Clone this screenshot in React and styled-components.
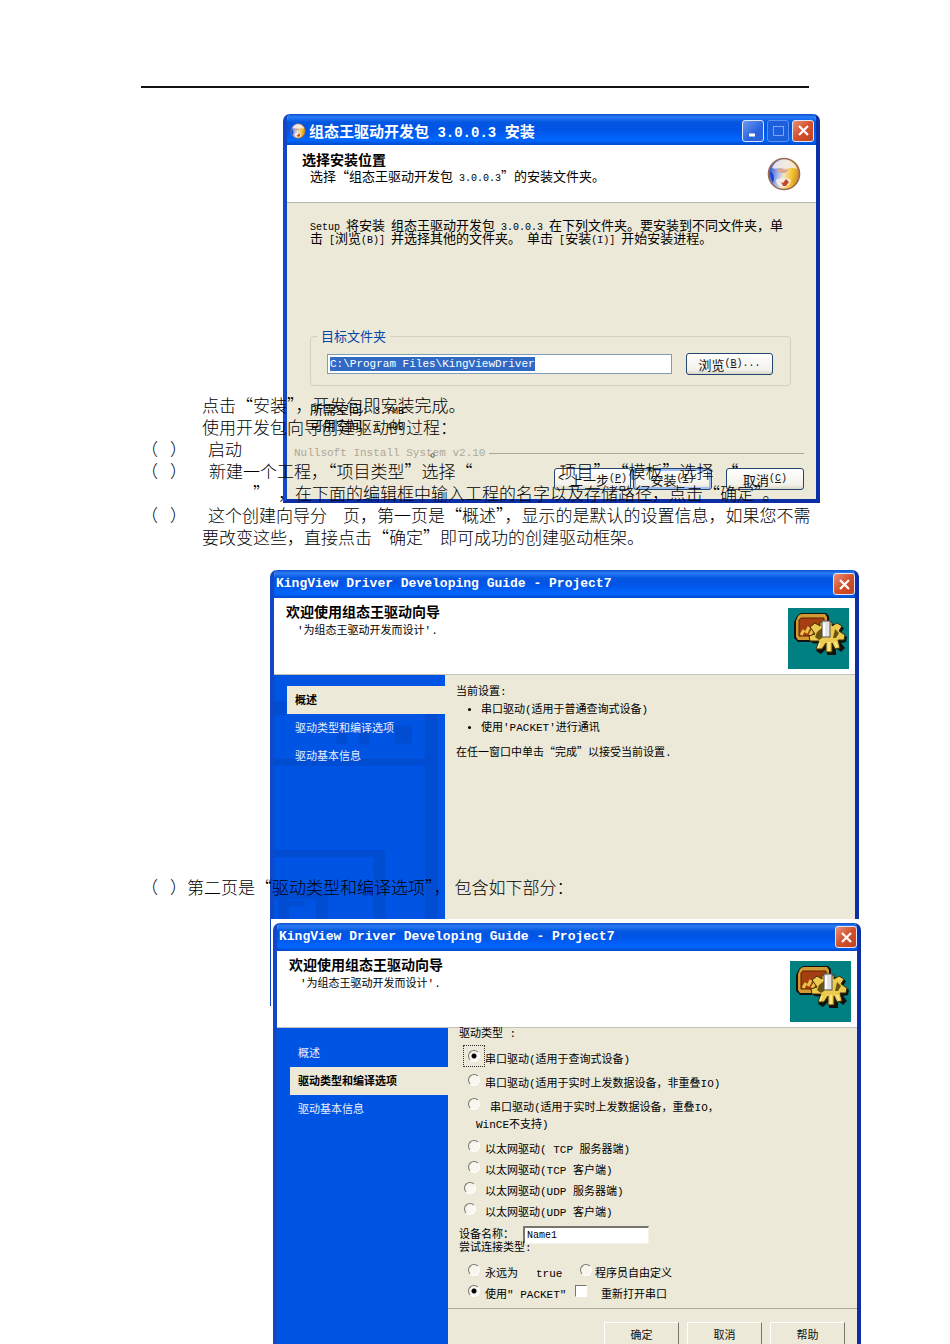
import React from 'react'
import styled, { createGlobalStyle } from 'styled-components'


const GuideDialog = ({ active, children, footer }) => {
  const steps = ['概述', '驱动类型和编译选项', '驱动基本信息'];

  return (
    <Dialog>
      <GuideTitleBar>
        <GuideTitle>KingView Driver Developing Guide - Project7</GuideTitle>
        <CloseButton />
      </GuideTitleBar>
      <GuideHeader>
        <div>
          <GuideHeading>欢迎使用组态王驱动向导</GuideHeading>
          <GuideSub>'为组态王驱动开发而设计'.</GuideSub>
        </div>
        <GearPicture />
      </GuideHeader>
      <GuideBody>
        <StepNav>
          {active === 0 && <NavPattern />}
          {steps.map((step, i) => (
            <StepLink key={step} href="#" $active={i === active}>{step}</StepLink>
          ))}
        </StepNav>
        <GuideContent>
          {children}
          {footer}
        </GuideContent>
      </GuideBody>
    </Dialog>
  )
};

const CloseButton = () => (
  <CaptionButton $close aria-label="关闭">
    <svg width="13" height="13" viewBox="0 0 13 13">
      <path d="M2 2L11 11M11 2L2 11" stroke="#fff" strokeWidth="2.2" />
    </svg>
  </CaptionButton>
);

const GlobeIcon = ({ size }) => (
  <svg width={size} height={size} viewBox="0 0 34 34">
    <defs>
      <linearGradient id="globe" x1="0" y1="0.4" x2="1" y2="0.6">
        <stop offset="0" stopColor="#2a4fd0" />
        <stop offset="0.3" stopColor="#9db4ee" />
        <stop offset="0.5" stopColor="#f6e3c8" />
        <stop offset="0.75" stopColor="#f3c426" />
        <stop offset="1" stopColor="#c9842a" />
      </linearGradient>
    </defs>
    <circle cx="17" cy="17" r="15.5" fill="url(#globe)" stroke="#9a6a58" strokeWidth="1.6" />
    <path d="M5 11C8 4 14 2 19 3C25 4 29 8 30 12C25 10 22 12 18 11C13 10 9 13 5 11Z" fill="#f4ece6" opacity="0.9" />
    <path d="M10 12C14 10 18 14 22 12L20 15C16 17 13 15 10 15Z" fill="#dca88c" />
    <path d="M9 23C13 20 20 20 24 23C24 27 20 31 15 30C11 29 9 26 9 23Z" fill="#f8efe4" opacity="0.85" />
    <path d="M14 25L16 26L19 22L22 25L19 29H16Z" fill="#c8442a" />
    <path d="M3 15C5 14 7 18 7 22L6 26C4 23 3 19 3 15Z" fill="#2346c8" />
  </svg>
);

const GearPicture = () => (
  <svg width="61" height="61" viewBox="0 0 61 61">
    <rect width="61" height="61" fill="#008080" />
    <path d="M9 8L13 5H38L41 8V30L37 34H10L6 30V14Z" fill="#111" />
    <path d="M10 8L13 6H37L39 9V29L36 32H10L8 29V13Z" fill="#d39a33" />
    <path d="M13 10H36V28H11V12Z" fill="#a53e10" stroke="#5a2205" />
    <path d="M13 27L16 22M18 25L21 19M22 27L25 22" stroke="#e8c548" strokeWidth="3" />
    <path d="M22 19L27 15L32 18V14H44V18L49 15L54 18L51 23L57 27L56 32L51 33L55 38L51 42L46 38V45H37V38L31 44L26 41L30 34L22 33L21 28L27 26Z" fill="#111" transform="translate(2 2)" />
    <path d="M22 19L27 15L32 18V14H44V18L49 15L54 18L51 23L57 27L56 32L50 32L52 40L47 41L44 35V44H38V35L34 41L28 41L31 33L22 33L21 28L27 26Z" fill="#edcb50" stroke="#3a3008" />
    <path d="M29 24L34 20V30L31 32L27 29ZM47 21L51 25L48 30L45 30Z" fill="#6a5510" />
    <rect x="34" y="13" width="8" height="16" fill="#e4e4e4" stroke="#555" />
    <path d="M36 15V28" stroke="#fff" strokeWidth="2" />
    <path d="M32 35L30 40M41 34V43M47 34L49 39" stroke="#fff0a0" strokeWidth="1.5" />
  </svg>
);

const NavPattern = () => (
  <PatternSvg viewBox="0 0 170 330" preserveAspectRatio="xMinYMin meet">
    <g fill="#004dd2">
      <rect x="0" y="26" width="12" height="14" />
      <rect x="62" y="54" width="10" height="15" />
      <rect x="85" y="54" width="10" height="15" />
      <rect x="120" y="50" width="17" height="18" />
      <rect x="0" y="83" width="150" height="7" />
      <rect x="150" y="38" width="13" height="292" />
      <rect x="0" y="174" width="111" height="7" />
      <rect x="99" y="181" width="12" height="149" />
      <rect x="0" y="215" width="42" height="8" />
      <rect x="42" y="215" width="12" height="115" />
      <rect x="4" y="223" width="11" height="107" />
      <rect x="15" y="225" width="16" height="5" />
    </g>
  </PatternSvg>
);

const RadioOption = ({ name, checked, focused, outset, label }) => (
  <Option $outset={outset}>
    <RadioSlot $focused={focused}><Radio type="radio" name={name} defaultChecked={checked} /></RadioSlot>
    <span>{label}</span>
  </Option>
);

const App = () => {
  return (
    <>
      <GlobalStyle />
      <Page>
        <HeaderRule />

        <Section>
          <SetupFigure>
            <Dialog>
              <TitleBar>
                <GlobeIcon size={16} />
                <SetupTitle>组态王驱动开发包<TitleLatin> 3.0.0.3 </TitleLatin>安装</SetupTitle>
                <CaptionButton aria-label="最小化">
                  <svg width="13" height="13" viewBox="0 0 13 13"><path d="M2 11H8" stroke="#fff" strokeWidth="3" /></svg>
                </CaptionButton>
                <CaptionButton $dim aria-label="最大化">
                  <svg width="13" height="13" viewBox="0 0 13 13"><path d="M1 2.5H12M1.5 2V11.5H11.5V2" fill="none" stroke="#7fa6f5" /></svg>
                </CaptionButton>
                <CloseButton />
              </TitleBar>
              <SetupHeader>
                <div>
                  <SetupHeading>选择安装位置</SetupHeading>
                  <SetupSub>选择“组态王驱动开发包<Latin> 3.0.0.3</Latin>”的安装文件夹。</SetupSub>
                </div>
                <GlobeIcon size={34} />
              </SetupHeader>
              <SetupBody>
                <SetupText>
                  <Latin>Setup </Latin>将安装<Latin> </Latin>组态王驱动开发包<Latin> 3.0.0.3 </Latin>在下列文件夹。要安装到不同文件夹，单<br />
                  击<Latin> [</Latin>浏览<Latin>(B)] </Latin>并选择其他的文件夹。<Latin> </Latin>单击<Latin> [</Latin>安装<Latin>(I)] </Latin>开始安装进程。
                </SetupText>
                <FolderGroup>
                  <FolderLegend>目标文件夹</FolderLegend>
                  <PathBox><PathInput aria-label="目标文件夹" defaultValue="C:\Program Files\KingViewDriver" /></PathBox>
                  <XpButton $width={87}>浏览<Latin>(<u>B</u>)...</Latin></XpButton>
                </FolderGroup>
                <SpaceInfo>
                  所需空间<Latin>: 3.7MB</Latin><br />
                  可用空间<Latin>: 1.4GB</Latin>
                </SpaceInfo>
                <Brand>Nullsoft Install System v2.10</Brand>
                <SetupButtons>
                  <XpButton $width={77}><Latin>&lt; </Latin>上一步<Latin>(<u>P</u>)</Latin></XpButton>
                  <XpButton $width={79} $primary>安装<Latin>(<u>I</u>)</Latin></XpButton>
                  <XpButton $width={78} $last>取消<Latin>(<u>C</u>)</Latin></XpButton>
                </SetupButtons>
              </SetupBody>
            </Dialog>
          </SetupFigure>
          <Notes $top={280}>
            <Note>
              <span />
              <p>点击“安装”，开发包即安装完成。<br />使用开发包向导创建驱动的过程：</p>
            </Note>
            <Note>
              <span>（<Blank $width={12} />）</span>
              <p><Blank $width={6} />启动<Blank $width={188} /><FullStop>。</FullStop></p>
            </Note>
            <Note>
              <span>（<Blank $width={12} />）</span>
              <p>
                <Blank $width={7} />新建一个工程，“项目类型”选择“<Blank $width={87} />项目”<Blank $width={1} />“模板”选择<Blank $width={8} />“<br />
                <Blank $width={51} />”<Blank $width={8} />，在下面的编辑框中输入工程的名字以及存储路径，点击“确定”。
              </p>
            </Note>
            <Note>
              <span>（<Blank $width={12} />）</span>
              <p>
                <Blank $width={6} />这个创建向导分<Blank $width={16} />页，第一页是“概述”，显示的是默认的设置信息，如果您不需<br />
                要改变这些，直接点击“确定”即可成功的创建驱动框架。
              </p>
            </Note>
          </Notes>
        </Section>

        <Section>
          <GuideFigure>
            <GuideDialog active={0}>
              <Summary>
                <p>当前设置:</p>
                <ul>
                  <li>串口驱动(适用于普通查询式设备)</li>
                  <li>使用'PACKET'进行通讯</li>
                </ul>
                <p>在任一窗口中单击<CjkText>“完成”</CjkText>以接受当前设置.</p>
              </Summary>
            </GuideDialog>
          </GuideFigure>
          <Notes $top={306}>
            <p>（<Blank $width={12} />）第二页是“驱动类型和编译选项”，<Blank $width={4} />包含如下部分：</p>
          </Notes>
        </Section>

        <OverlapFigure>
          <GuideDialog
            active={1}
            footer={
              <GuideButtons>
                <ClassicButton>确定</ClassicButton>
                <ClassicButton>取消</ClassicButton>
                <ClassicButton>帮助</ClassicButton>
              </GuideButtons>
            }
          >
            <GroupLabel>驱动类型 :</GroupLabel>
            <SerialOptions>
              <RadioOption name="driver" checked focused label="串口驱动(适用于查询式设备)" />
              <RadioOption name="driver" label="串口驱动(适用于实时上发数据设备，非重叠IO)" />
              <RadioOption name="driver" label={<><Blank $width={5} />串口驱动(适用于实时上发数据设备，重叠IO，</>} />
            </SerialOptions>
            <OptionRest>WinCE不支持)</OptionRest>
            <RadioOption name="driver" label="以太网驱动( TCP 服务器端)" />
            <RadioOption name="driver" label="以太网驱动(TCP 客户端)" />
            <RadioOption name="driver" outset label="以太网驱动(UDP 服务器端)" />
            <RadioOption name="driver" outset label="以太网驱动(UDP 客户端)" />
            <NameRow>
              <label htmlFor="device">设备名称：</label>
              <NameInput id="device" defaultValue="Name1" />
            </NameRow>
            <GroupLabel>尝试连接类型:</GroupLabel>
            <ConnectGrid>
              <RadioOption name="connect" label={<>永远为<Blank $width={18} />true</>} />
              <RadioOption name="connect" label="程序员自由定义" />
              <RadioOption name="connect" checked label={'使用" PACKET"'} />
              <CheckOption><CheckBox type="checkbox" /><span>重新打开串口</span></CheckOption>
            </ConnectGrid>
          </GuideDialog>
        </OverlapFigure>
      </Page>
    </>
  )
};

export default App

const GlobalStyle = createGlobalStyle`
  * {
    box-sizing: border-box;
  }
  body {
    margin: 0;
    background-color: #fff;
    color: #000;
    font-family: 'Noto Sans CJK SC', sans-serif;
  }
  p, ul {
    margin: 0;
    padding: 0;
  }
  svg {
    display: block;
    flex-shrink: 0;
  }
`;

const Page = styled.main`
  height: 100vh;
  overflow: hidden;
  padding: 86px 89px 0 141px;
`;

const HeaderRule = styled.div`
  height: 2px;
  margin: 0 52px 26px 0;
  background-color: #111;
`;

/* the figure and the notes share one cell, the notes run over the figure */
const Section = styled.section`
  display: grid;
  grid-template-columns: minmax(0, 1fr);
  margin-bottom: 22px;
  > * {
    grid-area: 1 / 1;
  }
`;

const SetupFigure = styled.div`
  margin: 0 41px 0 142px;
  height: 389px;
  display: grid;
`;

const GuideFigure = styled.div`
  margin: 0 2px 0 129px;
  height: 436px;
  display: grid;
`;

const OverlapFigure = styled.div`
  position: relative;
  margin: -109px 0 0 130px;
  padding: 4px 0 0 2px;
  height: 460px;
  background-color: #fff;
  display: grid;
`;

const Notes = styled.div`
  z-index: 1;
  padding-top: ${({ $top }) => $top}px;
  font-size: 17px;
  font-weight: 300;
  line-height: 22px;
  white-space: nowrap;
  pointer-events: none;
`;

const Note = styled.div`
  display: grid;
  grid-template-columns: 61px 1fr;
`;

const FullStop = styled.span`
  font-size: 13px;
  line-height: 0;
`;

const Blank = styled.span`
  display: inline-block;
  width: ${({ $width }) => $width}px;
`;

const Latin = styled.span`
  font-family: 'Liberation Mono', monospace;
  font-size: 10px;
  line-height: 0;
  white-space: pre;
`;

const TitleLatin = styled.span`
  font-family: 'Liberation Mono', monospace;
  font-size: 14px;
  line-height: 0;
  white-space: pre;
`;

const CjkText = styled.span`
  font-family: 'Noto Sans CJK SC', sans-serif;
`;

const Dialog = styled.div`
  display: flex;
  flex-direction: column;
  min-width: 0;
  overflow: hidden;
  border: 4px solid #1148c8;
  border-top: none;
  border-right-color: #0d2fa6;
  border-bottom-color: #0d2fa6;
  border-radius: 7px 7px 0 0;
  background-color: #ece9d8;
`;

const TitleBar = styled.div`
  display: flex;
  align-items: center;
  gap: 3px;
  height: 31px;
  flex-shrink: 0;
  padding: 2px 2px 0 3px;
  background: linear-gradient(#0a50d0 0, #2a7cf5 3px, #0457e0 8px, #0054e6 50%, #0066ff 85%, #0048c8 100%);
  color: #fff;
`;

const GuideTitleBar = styled(TitleBar)`
  height: 28px;
  padding: 0 0 0 2px;
`;

const SetupTitle = styled.h1`
  flex: 1;
  margin: 0;
  font-size: 15px;
  line-height: 20px;
  font-weight: 700;
  white-space: nowrap;
`;

const GuideTitle = styled.h2`
  flex: 1;
  margin: 0;
  font-family: 'Liberation Mono', monospace;
  font-size: 13px;
  line-height: 20px;
  font-weight: 700;
  white-space: nowrap;
`;

const CaptionButton = styled.button`
  display: flex;
  align-items: center;
  justify-content: center;
  width: 22px;
  height: 22px;
  padding: 0;
  border: 1px solid ${({ $dim }) => ($dim ? '#5d8ff0' : '#dfe8fb')};
  border-radius: 3px;
  background: ${({ $close, $dim }) => ($close ? 'linear-gradient(135deg, #e8907a, #d4502c 50%, #c04420)' : $dim ? '#1c5fdc' : 'linear-gradient(135deg, #6d9bf2, #2a63dc 60%)')};
`;

const SetupHeader = styled.div`
  display: flex;
  justify-content: space-between;
  height: 58px;
  flex-shrink: 0;
  padding: 6px 15px 0;
  border-bottom: 1px solid #b9b7a8;
  background-color: #fff;
  > svg {
    margin-top: 6px;
  }
`;

const SetupHeading = styled.h2`
  margin: 0;
  font-size: 14px;
  line-height: 17px;
  font-weight: 700;
`;

const SetupSub = styled.p`
  padding-left: 8px;
  font-size: 13px;
  line-height: 16px;
`;

const SetupBody = styled.div`
  flex: 1;
  display: flex;
  flex-direction: column;
  padding: 15px 12px 0 23px;
  font-size: 13px;
`;

const SetupText = styled.p`
  line-height: 13px;
  white-space: nowrap;
`;

const FolderGroup = styled.fieldset`
  display: flex;
  align-items: center;
  gap: 14px;
  min-width: 0;
  margin: 83px 13px 0 0;
  padding: 8px 17px 10px 16px;
  border: 1px solid #d3d0bf;
  border-radius: 4px;
`;

const FolderLegend = styled.legend`
  margin-left: -10px;
  padding: 0 4px;
  color: #0046a8;
  font-size: 13px;
  line-height: 18px;
`;

const PathBox = styled.div`
  flex: 1;
  display: flex;
  height: 20px;
  padding: 2px;
  border: 1px solid #7f9db9;
  background-color: #fff;
`;

const PathInput = styled.input`
  field-sizing: content;
  padding: 0;
  border: none;
  background-color: #316ac5;
  color: #fff;
  font-family: 'Liberation Mono', monospace;
  font-size: 11px;
  line-height: 14px;
`;

const XpButton = styled.button`
  display: flex;
  align-items: center;
  justify-content: center;
  width: ${({ $width }) => $width}px;
  height: 22px;
  flex-shrink: 0;
  margin-left: ${({ $last }) => ($last ? '12px' : '0')};
  padding: 0;
  border: 1px solid #24466e;
  border-radius: 3px;
  background: linear-gradient(#fff, #f2f1ea 80%, #d8d4c6);
  box-shadow: ${({ $primary }) => ($primary ? 'inset 0 0 0 2px #9dbcf0' : 'none')};
  color: #111;
  font-family: 'Noto Sans CJK SC', sans-serif;
  font-size: 13px;
`;

const SpaceInfo = styled.p`
  margin-top: 15px;
  line-height: 16px;
`;

const Brand = styled.div`
  display: flex;
  align-items: center;
  gap: 4px;
  margin: 13px 0 0 -16px;
  color: #aca899;
  font-family: 'Liberation Mono', monospace;
  font-size: 11px;
  line-height: 14px;
  white-space: nowrap;
  &::after {
    content: '';
    flex: 1;
    border-top: 1px solid #aca899;
  }
`;

const SetupButtons = styled.div`
  display: flex;
  justify-content: flex-end;
  gap: 2px;
  margin-top: 8px;
`;

const GuideHeader = styled.div`
  display: flex;
  justify-content: space-between;
  height: 77px;
  flex-shrink: 0;
  padding: 3px 6px 0 12px;
  border-bottom: 1px solid #c4c2b6;
  background-color: #fff;
  > svg {
    margin-top: 7px;
  }
`;

const GuideHeading = styled.h3`
  margin: 0;
  font-size: 14px;
  line-height: 20px;
  font-weight: 700;
`;

const GuideSub = styled.p`
  padding-left: 11px;
  font-family: 'Liberation Mono', 'Noto Sans CJK SC', monospace;
  font-size: 11px;
  line-height: 20px;
`;

const GuideBody = styled.div`
  flex: 1;
  display: flex;
`;

const StepNav = styled.nav`
  position: relative;
  width: 171px;
  flex-shrink: 0;
  padding-top: 11px;
  overflow: hidden;
  background-color: #0054e3;
`;

const PatternSvg = styled.svg`
  position: absolute;
  top: 0;
  left: 0;
  width: 100%;
`;

const StepLink = styled.a`
  position: relative;
  display: block;
  height: 28px;
  margin-left: 13px;
  padding-left: 8px;
  background-color: ${({ $active }) => ($active ? '#ece9d8' : 'transparent')};
  color: ${({ $active }) => ($active ? '#000' : '#e6eefc')};
  font-size: 11px;
  line-height: 26px;
  font-weight: ${({ $active }) => ($active ? 700 : 400)};
  text-decoration: none;
`;

const GuideContent = styled.div`
  flex: 1;
  display: flex;
  flex-direction: column;
  min-width: 0;
  font-family: 'Liberation Mono', 'Noto Sans CJK SC', monospace;
  font-size: 11px;
  line-height: 13px;
  white-space: nowrap;
`;

const Summary = styled.div`
  padding: 8px 11px;
  line-height: 18px;
  ul {
    padding-left: 25px;
    margin-bottom: 5px;
  }
`;

const GroupLabel = styled.p`
  padding-left: 11px;
`;

const Option = styled.label`
  display: flex;
  align-items: center;
  gap: ${({ $outset }) => ($outset ? '9px' : '5px')};
  height: 21px;
  padding-left: ${({ $outset }) => ($outset ? '16px' : '20px')};
`;

const SerialOptions = styled.div`
  display: flex;
  flex-direction: column;
  gap: 3px;
  margin-top: 9px;
`;

const OptionRest = styled.p`
  padding: 0 0 8px 28px;
`;

const RadioSlot = styled.span`
  align-self: flex-start;
  display: flex;
  outline: ${({ $focused }) => ($focused ? '1px dotted #333' : 'none')};
  outline-offset: 4px;
`;

const Radio = styled.input`
  appearance: none;
  width: 12px;
  height: 12px;
  margin: 0;
  border: 1px solid;
  border-color: #77756c #fff #fff #77756c;
  border-radius: 50%;
  background-color: #f7f6ef;
  &:checked {
    background-image: radial-gradient(circle, #000 2px, transparent 3px);
  }
`;

const CheckOption = styled(Option)`
  gap: 14px;
  padding-left: 0;
`;

const CheckBox = styled.input`
  appearance: none;
  align-self: flex-start;
  width: 12px;
  height: 12px;
  margin: 0;
  border: 1px solid;
  border-color: #77756c #fff #fff #77756c;
  background-color: #fff;
`;

const NameRow = styled.div`
  display: flex;
  gap: 9px;
  height: 16px;
  margin-top: 2px;
  padding-left: 11px;
  line-height: 18px;
`;

const NameInput = styled.input`
  width: 126px;
  height: 18px;
  padding: 0 2px;
  border: 1px solid;
  border-width: 2px 1px 1px 2px;
  border-color: #77756c #f4f2e8 #f4f2e8 #77756c;
  background-color: #fff;
  font-family: 'Liberation Mono', monospace;
  font-size: 10px;
`;

const ConnectGrid = styled.div`
  display: grid;
  grid-template-columns: 127px 1fr;
  margin-top: 9px;
  padding-bottom: 2px;
  border-bottom: 1px solid #aca899;
  > :nth-child(2) {
    gap: 3px;
    padding-left: 5px;
  }
`;

const GuideButtons = styled.div`
  display: flex;
  justify-content: flex-end;
  gap: 8px;
  padding: 13px 12px 0 0;
`;

const ClassicButton = styled.button`
  width: 75px;
  height: 24px;
  padding: 0;
  border: 1px solid;
  border-color: #fff #77756c #77756c #fff;
  background-color: #ece9d8;
  color: #111;
  font-family: 'Noto Sans CJK SC', sans-serif;
  font-size: 11px;
`;
